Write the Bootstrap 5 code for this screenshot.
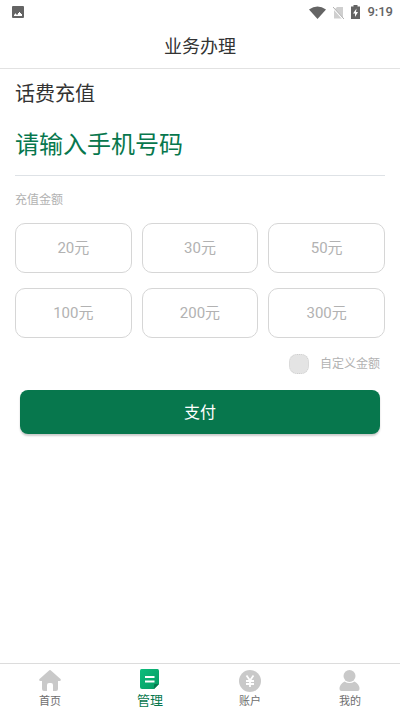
<!DOCTYPE html>
<html lang="zh-CN">
<head>
<meta charset="utf-8">
<meta name="viewport" content="width=device-width, initial-scale=1">
<title>业务办理</title>
<link href="https://cdn.jsdelivr.net/npm/bootstrap@5.3.0/dist/css/bootstrap.min.css" rel="stylesheet">
<style>
  body { font-family: Roboto, "Noto Sans CJK SC", sans-serif; color: #333; background: #fff; }
  .status-bar { height: 24px; padding: 0 7px 0 12px; color: #646464; font-size: 13px; line-height: 24px; }
  .status-icons { gap: 7px; }
  .status-time { font-weight: 500; }
  .title-bar { height: 45px; border-bottom: 1px solid #e2e2e2; }
  .title-bar h1 { font-size: 18px; line-height: 46px; }
  .page-main { padding: 0 15px; }
  .section-title { font-size: 20px; line-height: 32px; margin-top: 9px; }
  .phone-input { height: 62px; margin-top: 4px; font-size: 24px; color: #07774d; border-color: #d6d6d6; }
  .phone-input:focus { color: #07774d; border-color: #07774d; box-shadow: none; }
  .phone-input::placeholder { color: #07774d; opacity: 1; }
  .caption { font-size: 12px; line-height: 18px; color: #b2b2b2; }
  .amount-caption { margin: 15px 0 14px; }
  .amounts { --bs-gutter-x: 10px; --bs-gutter-y: 15px; }
  .amount-btn { height: 50px; border-color: #d6d6d6; border-radius: 10px; color: #b2b2b2; font-size: 15px; }
  .custom-row { padding: 0 5px; gap: 11px; }
  .custom-check { width: 20px; height: 20px; background-color: #e4e4e4; border: 1px dotted #cfcfcf; }
  .custom-check.form-check-input[type=checkbox] { border-radius: 8px; }
  .pay-row { padding: 0 5px; }
  .pay-btn { height: 44px; border-radius: 8px; font-size: 16px; line-height: 24px; padding: 2px 0 0; box-shadow: 0 2px 2px rgba(0,0,0,.2);
    --bs-btn-bg: #07774d; --bs-btn-border-width: 0; --bs-btn-color: #fff;
    --bs-btn-hover-bg: #066943; --bs-btn-hover-color: #fff; --bs-btn-active-bg: #055a39; }
  .tab-bar { height: 48px; border-top: 1px solid #dcdcdc; }
  .tab-bar a { color: #6e6e6e; font-size: 11px; line-height: 18px; padding-top: 5px; }
  .tab-bar a.active { color: #07774d; font-size: 13px; padding-top: 4px; }
</style>
<script src="https://cdn.jsdelivr.net/npm/bootstrap@5.3.0/dist/js/bootstrap.bundle.min.js"></script>
</head>
<body class="d-flex flex-column min-vh-100">
<div class="status-bar d-flex align-items-center justify-content-between">
  <svg width="12" height="12" viewBox="0 0 12 12" aria-hidden="true"><rect width="12" height="12" rx="1" fill="#646464"/><path d="M2 10V8.500h1v-1h1v1h2V7h1V6h1v1h1v1h1v2z" fill="#fff"/></svg>
  <div class="status-icons d-flex align-items-center">
    <svg width="17" height="13" viewBox="0 0 17 13" aria-hidden="true"><path d="M0 3.500Q8.500-2.500 17 3.500L8.500 13z" fill="#646464"/></svg>
    <svg width="11" height="13" viewBox="0 0 11 13" aria-hidden="true"><path d="M4 1h6v11.500H1V4z" fill="#cfcfcf"/><path d="M0 2l10.500 11.500" stroke="#fff" stroke-width="1.500"/><path d="M0 1l11 12" stroke="#b0b0b0"/></svg>
    <svg width="9" height="14" viewBox="0 0 9 14" aria-hidden="true"><path d="M0 1.500h2.500V0h4v1.500H9V14H0z" fill="#646464"/><path d="M5.500 3.500L2 8.500h2v3.500l3-5H5z" fill="#fff"/></svg>
    <span class="status-time">9:19</span>
  </div>
</div>
<header class="title-bar text-center"><h1 class="m-0 fw-normal">业务办理</h1></header>
<main class="page-main flex-grow-1">
  <form>
    <h2 class="section-title mb-0 fw-normal">话费充值</h2>
    <input class="phone-input form-control border-0 border-bottom rounded-0 bg-transparent p-0" type="tel" placeholder="请输入手机号码" aria-label="手机号码">
    <div class="caption amount-caption" id="amount-label">充值金额</div>
    <div class="amounts row row-cols-3" role="group" aria-labelledby="amount-label">
      <div class="col"><button type="button" class="amount-btn btn w-100">20元</button></div>
      <div class="col"><button type="button" class="amount-btn btn w-100">30元</button></div>
      <div class="col"><button type="button" class="amount-btn btn w-100">50元</button></div>
      <div class="col"><button type="button" class="amount-btn btn w-100">100元</button></div>
      <div class="col"><button type="button" class="amount-btn btn w-100">200元</button></div>
      <div class="col"><button type="button" class="amount-btn btn w-100">300元</button></div>
    </div>
    <div class="custom-row d-flex align-items-center justify-content-end my-3">
      <input class="custom-check form-check-input m-0" type="checkbox" id="custom">
      <label class="caption" for="custom">自定义金额</label>
    </div>
    <div class="pay-row"><button type="submit" class="pay-btn btn w-100">支付</button></div>
  </form>
</main>
<nav class="tab-bar d-flex bg-white sticky-bottom" aria-label="主导航">
  <a href="#" class="col d-flex flex-column align-items-center text-decoration-none">
    <svg width="22" height="24" viewBox="0 0 22 24" aria-hidden="true"><path d="M11 1q.5 0 1.500 1l9 8q1 2-1 2h-1.500v8q0 2-2 2h-3v-6q0-2-2-2h-2q-2 0-2 2v6H5q-2 0-2-2v-8H1.500q-2 0-1-2l9-8q1-1 1.500-1z" fill="#c9c9c9"/></svg>
    首页</a>
  <a href="#" class="active col d-flex flex-column align-items-center text-decoration-none" aria-current="page">
    <svg width="20" height="24" viewBox="0 0 20 24" aria-hidden="true"><defs><linearGradient id="g" x2="1" y2="1"><stop stop-color="#0cbd7c"/><stop offset="1" stop-color="#079a63"/></linearGradient></defs><path d="M1.500 1h16q1.500 0 1.500 2v13l-5 5H2q-2 0-2-2V2.500Q0 1 1.500 1z" fill="url(#g)"/><path d="M19 16l-5 5v-4q0-1 1-1z" fill="#07774d"/><path d="M5 9h9.500M5 13.500h9.500" stroke="#fff" stroke-width="2"/></svg>
    管理</a>
  <a href="#" class="col d-flex flex-column align-items-center text-decoration-none">
    <svg width="22" height="24" viewBox="0 0 22 24" aria-hidden="true"><circle cx="11" cy="12" r="11" fill="#c9c9c9"/><path d="M7.500 6.500l3.500 5 3.500-5M11 11v7M7 12h8M7 15h8" fill="none" stroke="#fff" stroke-width="1.800"/></svg>
    账户</a>
  <a href="#" class="col d-flex flex-column align-items-center text-decoration-none">
    <svg width="22" height="24" viewBox="0 0 22 24" aria-hidden="true"><circle cx="10.500" cy="7" r="6" fill="#c9c9c9"/><path d="M.5 20q0-5 5-7.500 5 3 10 0 5 2.500 5 7.500 0 2-2 2H2.500q-2 0-2-2z" fill="#c9c9c9"/></svg>
    我的</a>
</nav>
</body>
</html>
